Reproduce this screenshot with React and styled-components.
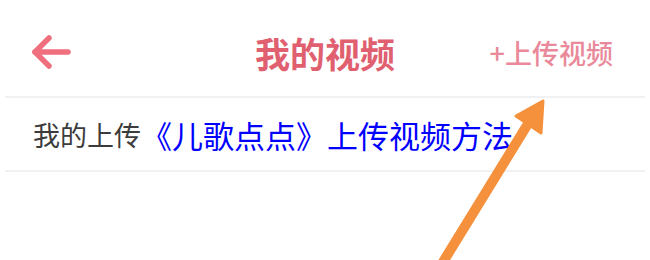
import React from 'react'
import styled, { createGlobalStyle } from 'styled-components'

const GlobalStyle = createGlobalStyle`
  html, body {
    margin: 0;
    padding: 0;
    background: #ffffff;
  }
  body {
    font-family: "Noto Sans CJK SC", "Noto Sans", sans-serif;
  }
`

const Page = styled.div`
  position: relative;
  width: 650px;
  height: 260px;
  overflow: hidden;
  background: #fff;
`

const Header = styled.div`
  display: grid;
  grid-template-columns: 1fr auto 1fr;
  align-items: center;
  height: 88px;
  padding: 8px 0 0;
  border-bottom: 2px solid #f1f1f1;
  margin: 0 5px;
`

const BackButton = styled.div`
  display: flex;
  align-items: center;
  padding-left: 25px;
`

const Title = styled.h1`
  margin: 0;
  font-size: 35px;
  font-weight: 700;
  color: #e0606f;
`

const Action = styled.div`
  justify-self: end;
  padding-right: 32px;
  font-size: 27px;
  font-weight: 500;
  color: #e9899a;
  white-space: nowrap;
`

const Row = styled.div`
  display: flex;
  align-items: center;
  height: 72px;
  margin: 0 5px;
  padding-left: 28px;
  border-bottom: 2px solid #f1f1f1;
  white-space: nowrap;
`

const Label = styled.span`
  font-size: 27px;
  color: #3c3c3c;
`

const Link = styled.span`
  font-size: 31px;
  color: #0000ff;
`

const Pointer = styled.svg`
  position: absolute;
  left: 0;
  top: 0;
  pointer-events: none;
`

const BackIcon = () => (
  <svg width="44" height="40" viewBox="0 0 44 40">
    <g fill="none" stroke="#ef6f7e" strokeWidth="5.5" strokeLinecap="round" strokeLinejoin="round">
      <path d="M5 20 H38" />
      <path d="M19 6 L5 20 L19 34" />
    </g>
  </svg>
)

export default function App() {
  return (
    <>
      <GlobalStyle />
      <Page>
        <Header>
          <BackButton>
            <BackIcon />
          </BackButton>
          <Title>我的视频</Title>
          <Action>+上传视频</Action>
        </Header>
        <Row>
          <Label>我的上传</Label>
          <Link>《儿歌点点》上传视频方法</Link>
        </Row>
        <Pointer width="650" height="260" viewBox="0 0 650 260">
          <path d="M443 262 L534 114" stroke="#f5903c" strokeWidth="10" strokeLinecap="round" fill="none" />
          <path d="M543 101 L516 116 L541 133 Z" fill="#f5903c" stroke="#f5903c" strokeWidth="3" strokeLinejoin="round" />
        </Pointer>
      </Page>
    </>
  )
}
